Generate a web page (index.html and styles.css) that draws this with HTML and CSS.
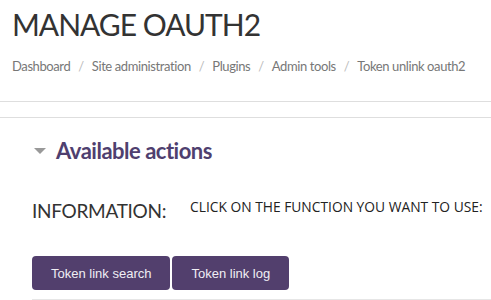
FILE: index.html
```html
<!DOCTYPE html>
<html lang="en">
<head>
  <meta charset="UTF-8">
  <title>Manage OAuth2</title>
  <link rel="stylesheet" href="styles.css">
</head>
<body>

<div class="page-header">
  <h1 class="page-title">MANAGE OAUTH2</h1>
  <ol class="breadcrumb">
    <li><a href="#">Dashboard</a></li>
    <li class="sep">/</li>
    <li><a href="#">Site administration</a></li>
    <li class="sep">/</li>
    <li><a href="#">Plugins</a></li>
    <li class="sep">/</li>
    <li><a href="#">Admin tools</a></li>
    <li class="sep">/</li>
    <li><span class="current">Token unlink oauth2</span></li>
  </ol>
</div>

<div class="content">
  <h2 class="actions-title"><span class="caret"></span>Available actions</h2>

  <div class="info-row">
    <span class="info-label">INFORMATION:</span>
    <span class="info-text">CLICK ON THE FUNCTION YOU WANT TO USE:</span>
  </div>

  <div class="buttons">
    <button type="button" class="btn">Token link search</button>
    <button type="button" class="btn">Token link log</button>
  </div>
</div>

</body>
</html>
```

FILE: styles.css
```css
* {
    box-sizing: border-box;
}

body {
    margin: 0;
    font-family: Lato, "Open Sans", sans-serif;
    color: #333;
    background: #fff;
    overflow: hidden;
}

.page-header {
    padding: 7px 12px 0;
    height: 102px;
    border-bottom: 1px solid #dedede;
}

.page-title {
    margin: 0;
    font-size: 30px;
    font-weight: 400;
    line-height: 34px;
    letter-spacing: -1px;
    color: #333;
}

.breadcrumb {
    display: flex;
    margin: 16px 0 0;
    padding: 0;
    list-style: none;
    font-size: 13px;
    line-height: 18px;
    letter-spacing: -0.4px;
    white-space: nowrap;
}

.breadcrumb a,
.breadcrumb .current {
    color: #777;
    text-decoration: none;
}

.breadcrumb .sep {
    padding: 0 8px;
    color: #bbb;
}

.content {
    margin-top: 15px;
    border-top: 1px solid #dedede;
    padding: 0 0 0 32px;
}

.actions-title {
    display: flex;
    align-items: center;
    margin: 19px 0 0;
    font-size: 22px;
    font-weight: 700;
    line-height: 28px;
    letter-spacing: -0.5px;
    color: #4f3f6f;
}

.caret {
    width: 0;
    height: 0;
    margin: 0 10px 0 2px;
    border-left: 6px solid transparent;
    border-right: 6px solid transparent;
    border-top: 6px solid #999;
}

.info-row {
    display: flex;
    align-items: flex-start;
    margin-top: 34px;
}

.info-label {
    font-size: 19px;
    line-height: 24px;
    letter-spacing: -0.3px;
    color: #333;
    width: 158px;
}

.info-text {
    font-family: "Open Sans", sans-serif;
    font-size: 13.8px;
    line-height: 16px;
    letter-spacing: 0;
    color: #222;
}

.buttons {
    display: flex;
    gap: 2px;
    margin-top: 33px;
    padding-bottom: 9px;
    border-bottom: 1px solid #e6e6e6;
}

.btn {
    height: 34px;
    padding: 0 19px;
    font-family: "Liberation Sans", Arial, sans-serif;
    font-size: 13px;
    color: #f0eef4;
    background: #523f6d;
    border: 0;
    border-radius: 4px;
}
```
